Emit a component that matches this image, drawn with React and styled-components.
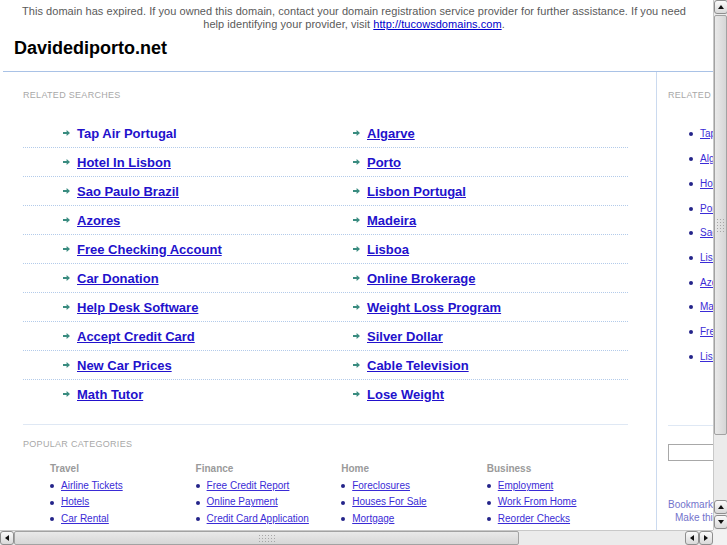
import React from 'react';
import styled, { createGlobalStyle } from 'styled-components';

const searches = [
  ['Tap Air Portugal', 'Algarve'],
  ['Hotel In Lisbon', 'Porto'],
  ['Sao Paulo Brazil', 'Lisbon Portugal'],
  ['Azores', 'Madeira'],
  ['Free Checking Account', 'Lisboa'],
  ['Car Donation', 'Online Brokerage'],
  ['Help Desk Software', 'Weight Loss Program'],
  ['Accept Credit Card', 'Silver Dollar'],
  ['New Car Prices', 'Cable Television'],
  ['Math Tutor', 'Lose Weight'],
];

const categories = [
  { title: 'Travel', links: ['Airline Tickets', 'Hotels', 'Car Rental'] },
  { title: 'Finance', links: ['Free Credit Report', 'Online Payment', 'Credit Card Application'] },
  { title: 'Home', links: ['Foreclosures', 'Houses For Sale', 'Mortgage'] },
  { title: 'Business', links: ['Employment', 'Work From Home', 'Reorder Checks'] },
];

const sideLinks = [
  'Tap Air Portugal', 'Algarve', 'Hotel In Lisbon', 'Porto', 'Sao Paulo Brazil',
  'Lisbon Portugal', 'Azores', 'Madeira', 'Free Checking Account', 'Lisboa',
];

const Arrow = () => (
  <svg width="7" height="6" viewBox="0 0 7 6">
    <path d="M0 2h3.6V0L7 3 3.6 6V4H0z" fill="#3a8c80" />
  </svg>
);

const Tri = ({ dir }) => {
  const pts = {
    up: '1,6 4,2 7,6',
    down: '1,2 4,6 7,2',
    left: '6,1 2,4 6,7',
    right: '2,1 6,4 2,7',
  }[dir];
  return (
    <svg width="8" height="8" viewBox="0 0 8 8">
      <polygon points={pts} fill="#111" />
    </svg>
  );
};

const App = () => {
  return (
    <Frame>
      <GlobalStyle />
      <Viewport>
        <Page>
          <Notice>
            This domain has expired. If you owned this domain, contact your domain registration service provider for further assistance. If you need help identifying your provider, visit <a href="#">http://tucowsdomains.com</a>.
          </Notice>
          <Header>
            <Title>Davidediporto.net</Title>
          </Header>
          <Body>
            <Main>
              <Label>Related Searches</Label>
              <SearchList>
                {searches.map((pair, i) => (
                  <SearchRow key={i}>
                    {pair.map((s, j) => (
                      <SearchCell key={s} second={j === 1}>
                        <Arrow />
                        <SearchLink href="#" plain={i === 0 && j === 0}>{s}</SearchLink>
                      </SearchCell>
                    ))}
                  </SearchRow>
                ))}
              </SearchList>
              <Label>Popular Categories</Label>
              <Categories>
                {categories.map((c) => (
                  <Category key={c.title}>
                    <CatTitle>{c.title}</CatTitle>
                    {c.links.map((l) => (
                      <CatItem key={l}>
                        <Dot />
                        <SmallLink href="#">{l}</SmallLink>
                      </CatItem>
                    ))}
                  </Category>
                ))}
              </Categories>
            </Main>
            <Side>
              <Label>Related Searches</Label>
              <SideList>
                {sideLinks.map((l, i) => (
                  <SideItem key={i}>
                    <Dot />
                    <SmallLink href="#">{l}</SmallLink>
                  </SideItem>
                ))}
              </SideList>
              <SideRule />
              <SearchBox />
              <Bookmark>Bookmark this page</Bookmark>
              <Bookmark indent>Make this your homepage</Bookmark>
            </Side>
          </Body>
        </Page>
      </Viewport>
      <VScroll>
        <ScrollBtn><Tri dir="up" /></ScrollBtn>
        <VThumb><Grip /></VThumb>
        <Track />
        <ScrollBtn><Tri dir="up" /></ScrollBtn>
        <ScrollBtn><Tri dir="down" /></ScrollBtn>
      </VScroll>
      <HScroll>
        <ScrollBtn><Tri dir="left" /></ScrollBtn>
        <HThumb><Grip wide /></HThumb>
        <Track />
        <ScrollBtn><Tri dir="left" /></ScrollBtn>
        <ScrollBtn><Tri dir="right" /></ScrollBtn>
      </HScroll>
      <Corner />
    </Frame>
  );
};

const GlobalStyle = createGlobalStyle`
  html, body {
    margin: 0;
    padding: 0;
    background: #fff;
    font-family: "Liberation Sans", Arial, sans-serif;
  }
`;

const Frame = styled.div`
  width: 727px;
  height: 545px;
  display: grid;
  grid-template-columns: 713px 14px;
  grid-template-rows: 530px 15px;
  overflow: hidden;
  background: #fff;
`;

const Viewport = styled.div`
  overflow: hidden;
`;

const Page = styled.div`
  width: 860px;
`;

const Notice = styled.div`
  width: 676px;
  margin-left: 16px;
  padding-top: 5px;
  text-align: center;
  font-size: 11px;
  line-height: 12.5px;
  letter-spacing: 0.05px;
  color: #5a5a5a;

  a {
    color: #0000cc;
  }
`;

const Header = styled.div`
  margin: 8px 0 0 3px;
  padding: 0 0 12px 11px;
  border-bottom: 1px solid #a9c2e6;
`;

const Title = styled.h1`
  margin: 0;
  font-size: 18px;
  line-height: 21px;
  font-weight: bold;
  color: #000;
`;

const Body = styled.div`
  display: flex;
`;

const Main = styled.div`
  width: 656px;
  flex: none;
  box-sizing: border-box;
  padding: 18px 28px 0 23px;
`;

const Label = styled.div`
  font-size: 9px;
  line-height: 11px;
  text-transform: uppercase;
  letter-spacing: 0.3px;
  color: #a8a8a8;
  white-space: nowrap;
`;

const SearchList = styled.div`
  margin: 18px 0 14px;
  padding-bottom: 16px;
  border-bottom: 1px solid #dfe8f4;
`;

const SearchRow = styled.div`
  display: grid;
  grid-template-columns: 330px 1fr;
  height: 28px;
  border-bottom: 1px dotted #b3cbea;

  &:last-child {
    border-bottom: none;
  }
`;

const SearchCell = styled.div`
  display: flex;
  align-items: center;
  gap: 7px;
  padding-left: ${(p) => (p.second ? '0' : '40px')};

  svg {
    flex: none;
  }
`;

const SearchLink = styled.a`
  font-size: 13px;
  font-weight: bold;
  color: #2211cc;
  text-decoration: ${(p) => (p.plain ? 'none' : 'underline')};
  white-space: nowrap;
`;

const Categories = styled.div`
  display: grid;
  grid-template-columns: repeat(4, 145.6px);
  margin-top: 11px;
  padding-left: 27px;
`;

const Category = styled.div`
  display: flex;
  flex-direction: column;
`;

const CatTitle = styled.div`
  font-size: 10px;
  line-height: 16px;
  font-weight: bold;
  color: #9a9a9a;
`;

const CatItem = styled.div`
  display: flex;
  align-items: center;
  height: 16.5px;
  gap: 7px;
`;

const Dot = styled.span`
  width: 4px;
  height: 4px;
  border-radius: 50%;
  background: #24248a;
  flex: none;
  margin-top: 2px;
`;

const SmallLink = styled.a`
  font-size: 10px;
  color: #3a2bd6;
  text-decoration: underline;
  white-space: nowrap;
`;

const Side = styled.div`
  flex: 1;
  min-height: 470px;
  border-left: 1px solid #cbdaef;
  padding: 18px 0 0 11px;
`;

const SideList = styled.div`
  margin-top: 20.6px;
  padding-left: 21px;
`;

const SideItem = styled.div`
  display: flex;
  align-items: center;
  gap: 7px;
  height: 24.7px;

  ${Dot} {
    margin-top: 1px;
  }
`;

const SideRule = styled.div`
  margin-top: 57px;
  border-top: 1px solid #dfe8f4;
  width: 160px;
`;

const SearchBox = styled.div`
  margin-top: 18px;
  width: 150px;
  height: 15px;
  border: 1px solid #a8a8a8;
`;

const Bookmark = styled.div`
  margin-top: ${(p) => (p.indent ? '0' : '37px')};
  padding-left: ${(p) => (p.indent ? '7px' : '0')};
  font-size: 10px;
  line-height: 13px;
  color: #7373cc;
  white-space: nowrap;
`;

const VScroll = styled.div`
  display: flex;
  flex-direction: column;
  background: #ececec;
  border-left: 1px solid #c8c8c8;
  box-sizing: border-box;
`;

const HScroll = styled.div`
  display: flex;
  background: #ececec;
  border-top: 1px solid #c8c8c8;
  box-sizing: border-box;
`;

const Corner = styled.div`
  background: #f2f2f2;
`;

const ScrollBtn = styled.div`
  flex: none;
  width: 14px;
  height: 14px;
  display: flex;
  align-items: center;
  justify-content: center;
  box-sizing: border-box;
  border: 1px solid #8e8e8e;
  border-radius: 3px;
  background: linear-gradient(#fbfbfb, #d9d9d9);
  margin: 0 0 1px 0;
`;

const VThumb = styled.div`
  flex: none;
  height: 420px;
  display: flex;
  align-items: center;
  justify-content: center;
  box-sizing: border-box;
  border: 1px solid #a2a2a2;
  border-radius: 2px;
  background: linear-gradient(90deg, #e9e9e9, #d6d6d6);
`;

const HThumb = styled.div`
  flex: none;
  width: 505px;
  display: flex;
  align-items: center;
  justify-content: center;
  box-sizing: border-box;
  border: 1px solid #a2a2a2;
  border-radius: 2px;
  background: linear-gradient(#e9e9e9, #d6d6d6);
`;

const Grip = styled.div`
  width: ${(p) => (p.wide ? '17px' : '10px')};
  height: ${(p) => (p.wide ? '9px' : '15px')};
  background-image: radial-gradient(circle, #a6a6a6 0.7px, transparent 0.9px);
  background-size: 3px 3px;
`;

const Track = styled.div`
  flex: 1;
  background-color: #f3f3f3;
  background-image: radial-gradient(circle, #e0e0e0 0.6px, transparent 0.8px);
  background-size: 2px 2px;
`;

export default App;
